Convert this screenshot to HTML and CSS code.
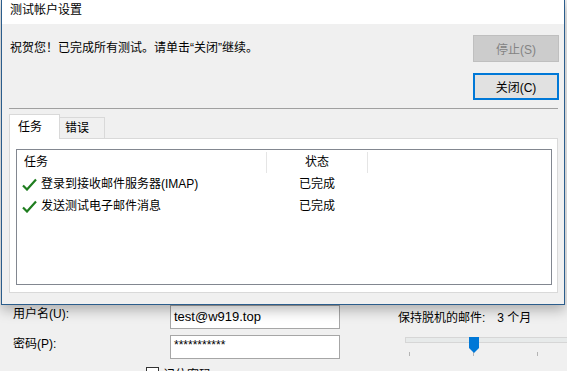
FILE: index.html
```html
<!DOCTYPE html>
<html lang="zh-CN">
<head>
    <meta charset="UTF-8">
    <title>测试帐户设置</title>
    <link rel="stylesheet" href="styles.css">
</head>
<body>
    <div class="window">
        <div class="account-form">
            <div class="form-left">
                <div class="form-row">
                    <label class="form-label">用户名(U):</label>
                    <div class="textbox">test@w919.top</div>
                </div>
                <div class="form-row">
                    <label class="form-label">密码(P):</label>
                    <div class="textbox password">***********</div>
                </div>
                <div class="check-row">
                    <span class="checkbox"></span>
                    <span>记住密码</span>
                </div>
            </div>
            <div class="form-right">
                <div class="offline-label">保持脱机的邮件:<span class="offline-value">3 个月</span></div>
                <div class="slider">
                    <div class="slider-track"></div>
                    <svg class="slider-thumb" width="10" height="16" viewBox="0 0 10 16">
                        <polygon points="0,0 10,0 10,11 5,16 0,11" fill="#0078d7"/>
                    </svg>
                    <div class="slider-ticks">
                        <span class="tick"></span>
                        <span class="tick"></span>
                        <span class="tick"></span>
                    </div>
                </div>
            </div>
        </div>
    </div>

    <div class="dialog">
        <div class="titlebar">测试帐户设置</div>
        <div class="dialog-body">
            <div class="top-area">
                <div class="message">祝贺您！已完成所有测试。请单击“关闭”继续。</div>
                <div class="buttons">
                    <button class="btn" disabled>停止(S)</button>
                    <button class="btn btn-default">关闭(C)</button>
                </div>
            </div>
            <div class="separator"></div>
            <div class="tabs">
                <div class="tab active">任务</div>
                <div class="tab">错误</div>
            </div>
            <div class="tab-panel">
                <div class="list">
                    <div class="list-head">
                        <div class="col-task">任务</div>
                        <div class="col-status">状态</div>
                    </div>
                    <div class="list-row">
                        <div class="col-task">
                            <svg class="check" width="15" height="13" viewBox="0 0 15 13">
                                <path d="M1 7.5 L5 11.5 L14 1.5" fill="none" stroke="#1f7d1f" stroke-width="2.2"/>
                            </svg>
                            登录到接收邮件服务器(IMAP)
                        </div>
                        <div class="col-status">已完成</div>
                    </div>
                    <div class="list-row">
                        <div class="col-task">
                            <svg class="check" width="15" height="13" viewBox="0 0 15 13">
                                <path d="M1 7.5 L5 11.5 L14 1.5" fill="none" stroke="#1f7d1f" stroke-width="2.2"/>
                            </svg>
                            发送测试电子邮件消息
                        </div>
                        <div class="col-status">已完成</div>
                    </div>
                </div>
            </div>
        </div>
    </div>
</body>
</html>
```

FILE: styles.css
```css
body {
    margin: 0;
    width: 567px;
    height: 371px;
    overflow: hidden;
    position: relative;
    background: #f0f0f0;
    font-family: "Liberation Sans", "Noto Sans CJK SC", sans-serif;
    font-size: 12px;
    color: #000;
}

/* window behind the dialog */
.window {
    padding-top: 305px;
}

.account-form {
    display: flex;
}

.form-left {
    width: 384px;
    padding-left: 13px;
    box-sizing: border-box;
}

.form-row {
    display: flex;
    height: 24px;
    margin-bottom: 6px;
}

.form-label {
    width: 157px;
    line-height: 18px;
}

.textbox {
    width: 170px;
    height: 24px;
    box-sizing: border-box;
    border: 1px solid #a6a6a6;
    background: #fff;
    padding: 0 3px;
    line-height: 22px;
    font-size: 13px;
}

.textbox.password {
    font-size: 12px;
    line-height: 18px;
}

.check-row {
    display: flex;
    align-items: center;
    gap: 4px;
    margin-left: 133px;
}

.checkbox {
    width: 11px;
    height: 11px;
    border: 1px solid #333;
    background: #fff;
}

.form-right {
    flex: 1;
    padding-left: 14px;
}

.offline-label {
    line-height: 26px;
}

.offline-value {
    margin-left: 12px;
}

.slider {
    position: relative;
    margin-left: 7px;
    margin-top: 6px;
    height: 24px;
}

.slider-track {
    height: 4px;
    margin-top: 4px;
    background: #e7eaea;
    border: 1px solid #d6d6d6;
    border-right: none;
}

.slider-thumb {
    position: absolute;
    left: 64px;
    top: 0;
}

.slider-ticks {
    display: flex;
    gap: 63px;
    margin-left: 4px;
    margin-top: 9px;
}

.tick {
    width: 1px;
    height: 4px;
    background: #b4b4b4;
}

/* dialog */
.dialog {
    position: absolute;
    left: 1px;
    top: -1px;
    width: 564px;
    height: 306px;
    box-sizing: border-box;
    border: 1px solid #2b5d8c;
    background: #f0f0f0;
    box-shadow: 0 5px 12px rgba(0, 0, 0, 0.28);
}

.titlebar {
    height: 24px;
    background: #fff;
    padding-left: 8px;
    line-height: 20px;
}

.dialog-body {
    padding: 11px 6px 0 7px;
}

.top-area {
    display: flex;
    justify-content: space-between;
}

.message {
    padding-left: 1px;
    line-height: 27px;
}

.buttons {
    display: flex;
    flex-direction: column;
    gap: 11px;
    margin-right: -1px;
}

.btn {
    width: 86px;
    height: 27px;
    font-family: inherit;
    font-size: 12px;
    background: #e1e1e1;
    border: 1px solid #adadad;
    color: #000;
    padding: 0;
}

.btn:disabled {
    background: #cccccc;
    border-color: #bfbfbf;
    color: #838383;
}

.btn-default {
    border: 2px solid #0078d7;
}

.separator {
    height: 1px;
    background: #a0a0a0;
    margin-top: 8px;
}

.tabs {
    display: flex;
    align-items: flex-end;
    margin-top: 5px;
    height: 25px;
    position: relative;
    z-index: 1;
}

.tab {
    height: 22px;
    box-sizing: border-box;
    border: 1px solid #d9d9d9;
    border-left: none;
    background: #f0f0f0;
    padding: 0 0 0 5px;
    width: 45px;
    line-height: 20px;
}

.tab.active {
    height: 25px;
    width: 51px;
    border-left: 1px solid #d9d9d9;
    border-bottom: none;
    background: #fff;
    padding-left: 8px;
    line-height: 24px;
}

.tab-panel {
    height: 155px;
    box-sizing: border-box;
    border: 1px solid #d9d9d9;
    background: #fff;
    margin-top: -1px;
    padding: 10px 5px 7px 6px;
}

.list {
    height: 100%;
    box-sizing: border-box;
    border: 1px solid #828790;
    background: #fff;
}

.list-head {
    display: flex;
    height: 23px;
    padding-top: 2px;
    box-sizing: border-box;
    line-height: 21px;
}

.list-head .col-task {
    padding-left: 7px;
    border-right: 1px solid #e5e5e5;
}

.list-head .col-status {
    border-right: 1px solid #e5e5e5;
}

.col-task {
    width: 250px;
    box-sizing: border-box;
    display: flex;
    align-items: center;
}

.col-status {
    width: 100px;
    text-align: center;
}

.list-row {
    display: flex;
    height: 22px;
    line-height: 22px;
}

.list-row .col-task {
    padding-left: 5px;
}

.check {
    margin-right: 4px;
}
```
